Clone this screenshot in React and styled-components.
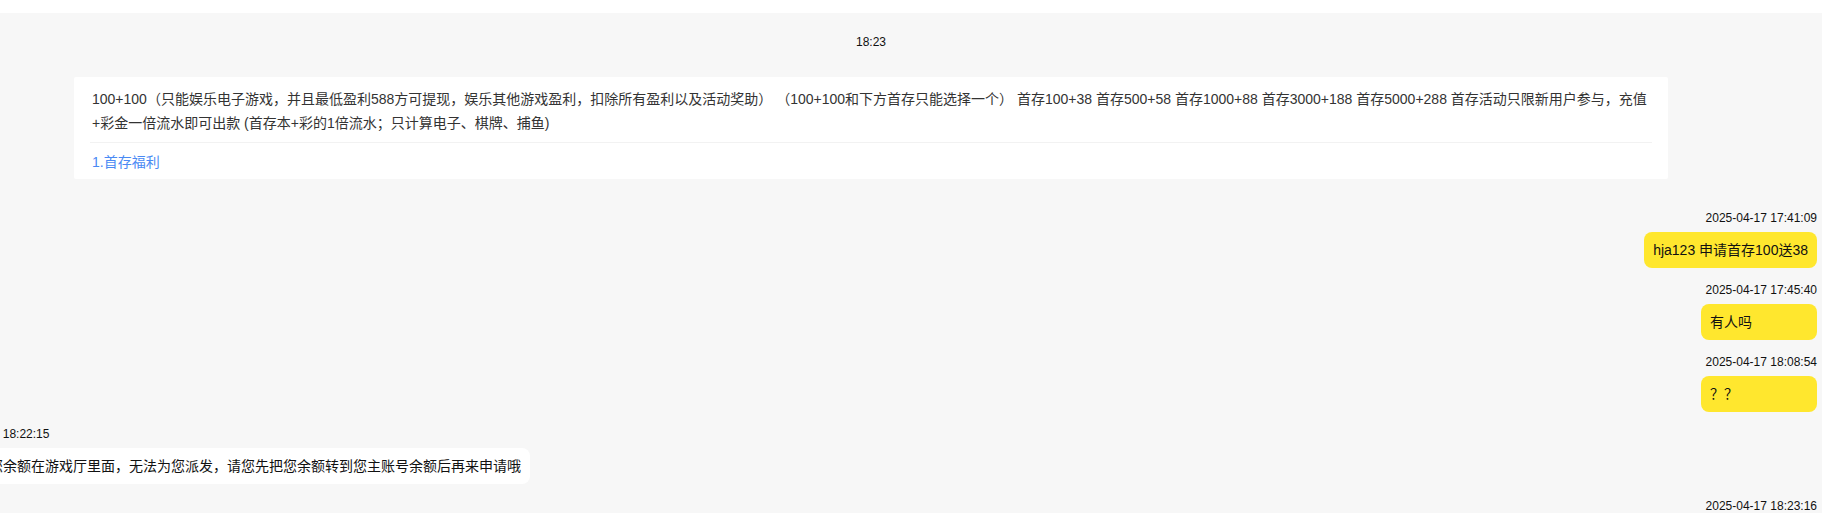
import React from "react";
import styled, { createGlobalStyle } from "styled-components";

const GlobalStyle = createGlobalStyle`
  html, body {
    margin: 0;
    padding: 0;
    overflow: hidden;
    background: #ffffff;
  }
  body {
    font-family: "Liberation Sans", Arial, "Noto Sans CJK SC", sans-serif;
  }
`;

const Page = styled.div`
  padding-top: 13px;
`;

const Chat = styled.div`
  margin-left: -80px;
  width: 1902px;
  box-sizing: border-box;
  padding: 21px 5px 40px;
  background: #f7f7f7;
  min-height: 600px;
`;

const CenterTime = styled.div`
  text-align: center;
  font-size: 12px;
  line-height: 16px;
  color: #111;
`;

const NoticeCard = styled.div`
  width: 1594px;
  box-sizing: border-box;
  margin: 27px auto 31px;
  padding: 10px 16px 7px;
  background: #ffffff;
  border-radius: 2px;
`;

const NoticeText = styled.div`
  font-size: 14px;
  line-height: 24px;
  color: #333;
  padding: 0 2px;
  padding-bottom: 7px;
  border-bottom: 1px solid #f2f2f2;
`;

const NoticeLink = styled.a`
  display: block;
  margin-top: 9px;
  padding: 0 2px;
  font-size: 14px;
  line-height: 20px;
  color: #4a8af4;
  text-decoration: none;
  cursor: pointer;
`;

const Message = styled.div`
  display: flex;
  flex-direction: column;
  align-items: ${(p) => (p.$mine ? "flex-end" : "flex-start")};
  padding-left: ${(p) => (p.$mine ? "0" : "13px")};
  margin-bottom: 14px;
`;

const Stamp = styled.div`
  font-size: 12px;
  line-height: 16px;
  color: #111;
`;

const Bubble = styled.div`
  margin-top: 6px;
  min-width: 116px;
  box-sizing: border-box;
  padding: 8px 9px;
  border-radius: 8px;
  font-size: 14px;
  line-height: 20px;
  color: #111;
  background: ${(p) => (p.$mine ? "#ffe72e" : "#ffffff")};
`;

const messages = [
  { mine: true, time: "2025-04-17 17:41:09", text: "hja123 申请首存100送38" },
  { mine: true, time: "2025-04-17 17:45:40", text: "有人吗" },
  { mine: true, time: "2025-04-17 18:08:54", text: "？？" },
  {
    mine: false,
    time: "2025-04-17 18:22:15",
    text: "您好，您余额在游戏厅里面，无法为您派发，请您先把您余额转到您主账号余额后再来申请哦",
  },
  { mine: true, time: "2025-04-17 18:23:16", text: "好的" },
];

export default function App() {
  return (
    <>
      <GlobalStyle />
      <Page>
        <Chat>
          <CenterTime>18:23</CenterTime>
          <NoticeCard>
            <NoticeText>
              100+100（只能娱乐电子游戏，并且最低盈利588方可提现，娱乐其他游戏盈利，扣除所有盈利以及活动奖助） （100+100和下方首存只能选择一个） 首存100+38 首存500+58 首存1000+88 首存3000+188 首存5000+288 首存活动只限新用户参与，充值+彩金一倍流水即可出款 (首存本+彩的1倍流水；只计算电子、棋牌、捕鱼)
            </NoticeText>
            <NoticeLink>1.首存福利</NoticeLink>
          </NoticeCard>
          {messages.map((m) => (
            <Message key={m.time} $mine={m.mine}>
              <Stamp>{m.time}</Stamp>
              <Bubble $mine={m.mine}>{m.text}</Bubble>
            </Message>
          ))}
        </Chat>
      </Page>
    </>
  );
}
